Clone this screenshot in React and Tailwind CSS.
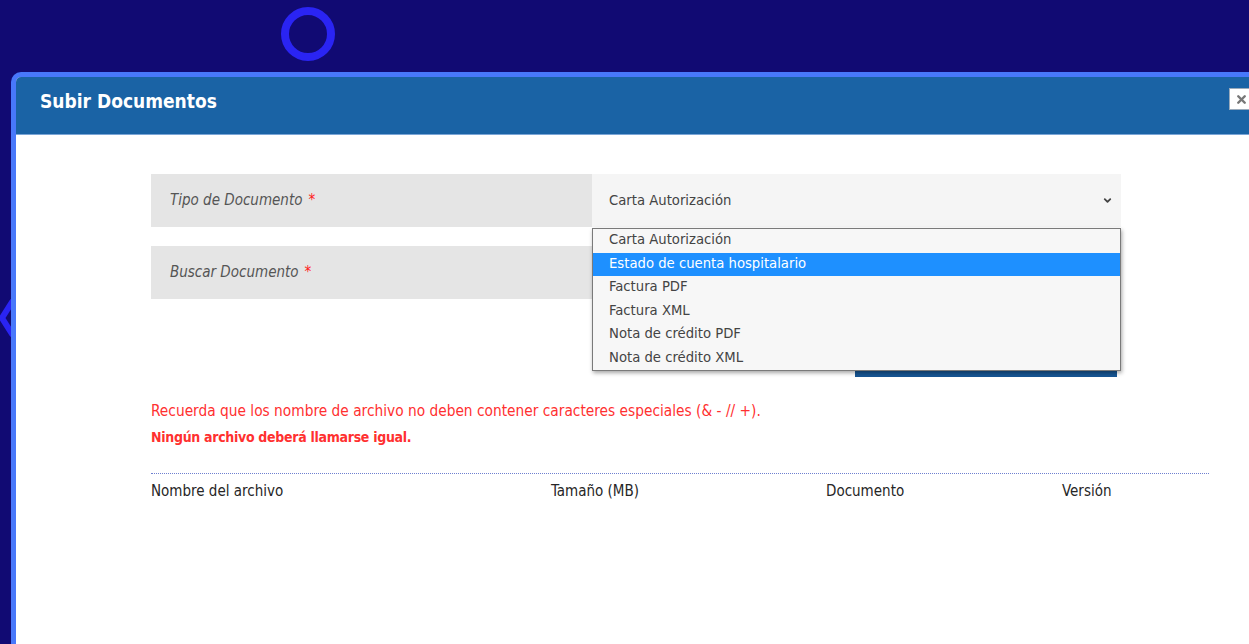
import { ChevronDown, X } from "lucide-react";

const FONT = "font-['DejaVu_Sans_Condensed','Liberation_Sans',Arial,sans-serif]";

const tipos = [
  "Carta Autorización",
  "Estado de cuenta hospitalario",
  "Factura PDF",
  "Factura XML",
  "Nota de crédito PDF",
  "Nota de crédito XML",
];

function FormRow({ label, children }) {
  return (
    <div className="flex h-[53px]">
      <div className="w-[441px] bg-[#e5e5e5] flex items-center pl-[19px] text-[15px] italic text-[#555]">
        {label}
        <span className="text-[#ff1a1a] ml-[6px] not-italic">*</span>
      </div>
      <div className="flex-1 bg-[#f5f5f5] relative">{children}</div>
    </div>
  );
}

export default function App() {
  return (
    <div className={`w-full h-[644px] bg-[#110a73] overflow-hidden relative ${FONT}`}>
      {/* spinner ring and carousel arrow behind the modal */}
      <div className="h-[72px] pt-[7px] pl-[281px]">
        <div className="w-[54px] h-[54px] rounded-full border-[8px] border-[#2a24f3]" />
      </div>
      <svg className="absolute left-0 top-[298px]" width="12" height="40" viewBox="0 0 12 40">
        <path d="M12 4 L2 20 L12 36" fill="none" stroke="#2a24f3" strokeWidth="6" strokeLinecap="round" />
      </svg>

      <div className="ml-[11px] w-[1260px] h-[600px] border-[5px] border-b-0 border-[#4878fb] rounded-t-[10px] bg-white overflow-hidden relative">
        <div className="h-[58px] bg-[#1a63a5] border-b border-[#7aa5d6] flex items-center pl-[24px] pb-[8px]">
          <h1 className="text-white font-bold text-[19px]">Subir Documentos</h1>
          <button className="absolute left-[1213px] top-[11px] w-[24px] h-[22px] bg-white border border-[#9ab] flex items-center justify-center">
            <X size={13} strokeWidth={4.5} className="text-[#777]" />
          </button>
        </div>

        <div className="pl-[135px] pt-[39px]">
          <div className="w-[970px] flex flex-col gap-[19px]">
            <FormRow label="Tipo de Documento">
              <div className="h-full flex items-center justify-between pl-[17px] pr-[8px] text-[14.7px] text-[#444]">
                <span>Carta Autorización</span>
                <ChevronDown size={11} strokeWidth={4} className="text-[#444]" />
              </div>
              <ul className="absolute left-0 top-[54px] w-[529px] bg-[#f7f7f7] border border-[#7a7a7a] shadow-[1px_2px_4px_rgba(0,0,0,0.35)] z-10 text-[14.7px] text-[#444]">
                {tipos.map((t, i) => (
                  <li
                    key={t}
                    className={`h-[23.5px] leading-[20px] pl-[16px] ${i === 1 ? "bg-[#1e90ff] text-white" : ""}`}
                  >
                    {t}
                  </li>
                ))}
              </ul>
            </FormRow>
            <FormRow label="Buscar Documento" />
          </div>

          <div className="w-[970px] flex justify-end pr-[4px] mt-[44px]">
            <button className="w-[262px] h-[34px] bg-[#165593]" />
          </div>

          <div className="mt-[21px] text-[#ff3030] text-[15.3px] leading-[26px]">
            <p>Recuerda que los nombre de archivo no deben contener caracteres especiales (&amp; - // +).</p>
            <p className="font-bold text-[14px] tracking-[-0.3px]">Ningún archivo deberá llamarse igual.</p>
          </div>

          <div className="w-[1058px] mt-[23px] border-t border-dotted border-[#6f80d0]" />
          <div className="w-[1058px] grid grid-cols-[400px_275px_236px_1fr] pt-[6px] text-[15px] text-[#262626]">
            <span>Nombre del archivo</span>
            <span>Tamaño (MB)</span>
            <span>Documento</span>
            <span>Versión</span>
          </div>
        </div>
      </div>
    </div>
  );
}
